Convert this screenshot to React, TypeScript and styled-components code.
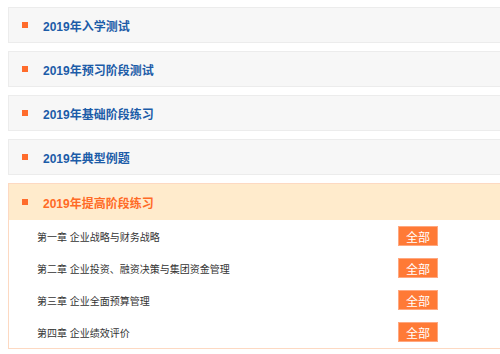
import React from 'react';
import styled, { createGlobalStyle } from 'styled-components';

const GlobalStyle = createGlobalStyle`
  html, body {
    margin: 0;
    padding: 0;
    background: #fff;
    overflow: hidden;
  }
  body {
    font-family: "Liberation Sans", "Noto Sans CJK SC", sans-serif;
  }
`;

const List = styled.div`
  width: 520px;
  padding: 7px 0 0 8px;
  display: flex;
  flex-direction: column;
  gap: 8px;
`;

const Panel = styled.div<{ $active?: boolean }>`
  border: 1px solid ${({ $active }) => ($active ? '#fdd9c2' : '#ececec')};
  background: ${({ $active }) => ($active ? '#fff' : '#f7f7f7')};
`;

const Header = styled.div<{ $active?: boolean }>`
  height: ${({ $active }) => ($active ? '36px' : '34px')};
  display: flex;
  align-items: center;
  padding-left: 13px;
  background: ${({ $active }) => ($active ? '#ffebcc' : '#f7f7f7')};
`;

const Bullet = styled.span`
  width: 6px;
  height: 6px;
  background: #ff6c2c;
  margin-right: 15px;
  flex-shrink: 0;
`;

const Title = styled.span<{ $active?: boolean }>`
  font-size: 12px;
  font-weight: bold;
  color: ${({ $active }) => ($active ? '#ff6a26' : '#1c5ca8')};
`;

const Body = styled.div`
  display: flex;
  flex-direction: column;
`;

const Row = styled.div`
  height: 32px;
  display: flex;
  align-items: center;
  padding-left: 28px;
`;

const Chapter = styled.span`
  font-size: 10px;
  color: #333;
  width: 361px;
  white-space: nowrap;
`;

const AllButton = styled.button`
  width: 40px;
  height: 20px;
  padding: 0;
  border: 1px solid #ffa880;
  background: #ff7a36;
  color: #fff;
  font-family: inherit;
  font-size: 12px;
  cursor: pointer;
`;

const sections = ['2019年入学测试', '2019年预习阶段测试', '2019年基础阶段练习', '2019年典型例题'];

const chapters = [
  '第一章 企业战略与财务战略',
  '第二章 企业投资、融资决策与集团资金管理',
  '第三章 企业全面预算管理',
  '第四章 企业绩效评价',
];

export default function App() {
  return (
    <>
      <GlobalStyle />
      <List>
        {sections.map((s) => (
          <Panel key={s}>
            <Header>
              <Bullet />
              <Title>{s}</Title>
            </Header>
          </Panel>
        ))}
        <Panel $active>
          <Header $active>
            <Bullet />
            <Title $active>2019年提高阶段练习</Title>
          </Header>
          <Body>
            {chapters.map((c) => (
              <Row key={c}>
                <Chapter>{c}</Chapter>
                <AllButton>全部</AllButton>
              </Row>
            ))}
          </Body>
        </Panel>
      </List>
    </>
  );
}
